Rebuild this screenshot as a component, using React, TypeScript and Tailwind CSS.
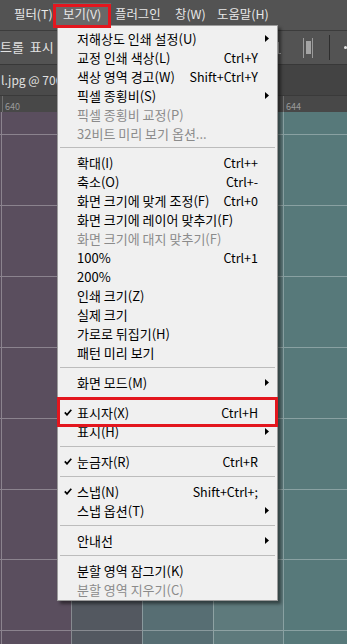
import React from "react";

type Item =
  | { kind: "row"; label: string; shortcut?: string; arrow?: boolean; check?: boolean; disabled?: boolean }
  | { kind: "sep"; first?: boolean };

const items: Item[] = [
  { kind: "row", label: "저해상도 인쇄 설정(U)", arrow: true },
  { kind: "row", label: "교정 인쇄 색상(L)", shortcut: "Ctrl+Y" },
  { kind: "row", label: "색상 영역 경고(W)", shortcut: "Shift+Ctrl+Y" },
  { kind: "row", label: "픽셀 종횡비(S)", arrow: true },
  { kind: "row", label: "픽셀 종횡비 교정(P)", disabled: true },
  { kind: "row", label: "32비트 미리 보기 옵션...", disabled: true },
  { kind: "sep", first: true },
  { kind: "row", label: "확대(I)", shortcut: "Ctrl++" },
  { kind: "row", label: "축소(O)", shortcut: "Ctrl+-" },
  { kind: "row", label: "화면 크기에 맞게 조정(F)", shortcut: "Ctrl+0" },
  { kind: "row", label: "화면 크기에 레이어 맞추기(F)" },
  { kind: "row", label: "화면 크기에 대지 맞추기(F)", disabled: true },
  { kind: "row", label: "100%", shortcut: "Ctrl+1" },
  { kind: "row", label: "200%" },
  { kind: "row", label: "인쇄 크기(Z)" },
  { kind: "row", label: "실제 크기" },
  { kind: "row", label: "가로로 뒤집기(H)" },
  { kind: "row", label: "패턴 미리 보기" },
  { kind: "sep" },
  { kind: "row", label: "화면 모드(M)", arrow: true },
  { kind: "sep" },
  { kind: "row", label: "표시자(X)", shortcut: "Ctrl+H", check: true },
  { kind: "row", label: "표시(H)", arrow: true },
  { kind: "sep" },
  { kind: "row", label: "눈금자(R)", shortcut: "Ctrl+R", check: true },
  { kind: "sep" },
  { kind: "row", label: "스냅(N)", shortcut: "Shift+Ctrl+;", check: true },
  { kind: "row", label: "스냅 옵션(T)", arrow: true },
  { kind: "sep" },
  { kind: "row", label: "안내선", arrow: true },
  { kind: "sep" },
  { kind: "row", label: "분할 영역 잠그기(K)" },
  { kind: "row", label: "분할 영역 지우기(C)", disabled: true },
];

const columns = [
  { w: "w-[1px]", bg: "bg-[#5a4e5e]", border: "" },
  { w: "w-[70px]", bg: "bg-[#5a4e5e]", border: "border-l border-white/30" },
  { w: "w-[71px]", bg: "bg-[#535860]", border: "border-l border-white/30" },
  { w: "w-[71px]", bg: "bg-[#576e73]", border: "border-l border-white/30" },
  { w: "w-[70px]", bg: "bg-[#5e7a7c]", border: "border-l border-white/30" },
  { w: "flex-1", bg: "bg-[#57797a]", border: "border-l border-white/30" },
];

const rows = [
  "h-[22px]",
  "h-[71px] border-t border-white/30",
  "h-[71px] border-t border-white/30",
  "h-[71px] border-t border-white/30",
  "h-[71px] border-t border-white/30",
  "h-[71px] border-t border-white/30",
  "h-[70px] border-t border-white/30",
  "h-[71px] border-t border-white/30",
  "flex-1 border-t border-white/30",
];

function Check() {
  return (
    <svg width="8" height="7" viewBox="0 0 8 7" className="block">
      <path d="M0.8 3.4 L3 5.8 L7.3 0.8" fill="none" stroke="#000" strokeWidth="1.7" />
    </svg>
  );
}

function Arrow() {
  return (
    <svg width="4" height="7" viewBox="0 0 4 7" className="block">
      <polygon points="0,0 4,3.5 0,7" fill="#000" />
    </svg>
  );
}

export default function App() {
  return (
    <div className="relative w-[347px] h-[644px] overflow-hidden bg-[#535353] flex flex-col font-['Noto_Sans_CJK_KR',sans-serif] text-[13px]">
      {/* Menu bar */}
      <div className="h-[30px] shrink-0 flex items-center pl-[14px] text-[#e8e8e8] pb-[2px] text-[12.4px]">
        <div className="w-[39px] whitespace-nowrap">필터(T)</div>
        <div className="w-[58px] h-[24px] mt-[2px] bg-[#686868] flex items-center pl-[10px] whitespace-nowrap pb-[2px]">보기(V)</div>
        <div className="w-[60px] ml-[4px] whitespace-nowrap">플러그인</div>
        <div className="w-[42px] whitespace-nowrap">창(W)</div>
        <div className="whitespace-nowrap">도움말(H)</div>
      </div>
      <div className="h-px shrink-0 bg-[#3c3c3c]" />
      {/* Options bar */}
      <div className="h-[33px] shrink-0 flex items-center text-[#e2e2e2]">
        <div className="w-[276px] flex">
          <div className="w-[56px] whitespace-nowrap overflow-hidden pb-[1px]">트롤&nbsp; 표시</div>
        </div>
        <div className="w-[5px] h-[12px] flex items-end">
          <div className="w-px h-full bg-[#a8a8a8] ml-[2px]" />
          <div className="w-[2px] h-px bg-[#a8a8a8]" />
        </div>
        <div className="w-[22px]" />
        <div className="w-[10px] h-[20px] flex items-center justify-between">
          <div className="w-px h-full bg-[#9a9a9a]" />
          <div className="w-[5px] h-[13px] bg-[#a4a4a4]" />
          <div className="w-px h-full bg-[#9a9a9a]" />
        </div>
        <div className="w-[16px]" />
        <div className="w-px h-[25px] bg-[#2e2e2e]" />
        <div className="w-[14px]" />
        <div className="w-[3px] h-[3px] rounded-full bg-[#e6e6e6]" />
      </div>
      <div className="h-px shrink-0 bg-[#383838]" />
      {/* Tab bar */}
      <div className="h-[30px] shrink-0 bg-[#434343] flex">
        <div className="w-[250px] bg-[#4a4a4a] flex items-center pl-[1px] text-[#e0e0e0] text-[12px]">
          <div className="whitespace-nowrap">l.jpg @ 706</div>
        </div>
      </div>
      {/* Ruler */}
      <div className="h-[17px] shrink-0 bg-[#484848] border-t border-[#3a3a3a] flex text-[9px] text-[#9a9a9a] leading-none">
        <div className="w-[283px] flex">
          <div className="ml-[2px] w-px h-full bg-[#6e6e6e]" />
          <div className="ml-[2px] pt-[6px]">640</div>
        </div>
        <div className="flex">
          <div className="w-px h-full bg-[#6e6e6e]" />
          <div className="ml-[2px] pt-[6px]">644</div>
        </div>
      </div>
      {/* Canvas */}
      <div className="flex-1 flex">
        {columns.map((c, i) => (
          <div key={i} className={`${c.w} ${c.bg} ${c.border} flex flex-col`}>
            {rows.map((r, j) => (
              <div key={j} className={r} />
            ))}
          </div>
        ))}
      </div>

      {/* Dropdown menu */}
      <div className="absolute left-[57px] top-[25px] w-[221px] bg-[#f0f0f0] border border-[#9c9c9c] pt-[3px] pb-[1px] shadow-[3px_3px_3px_rgba(0,0,0,0.45)] text-black">
        {items.map((it, i) =>
          it.kind === "sep" ? (
            <div key={i} className={it.first ? "h-[10px] pt-[4px]" : "h-[11px] pt-[5px]"}>
              <div className="h-px mx-[2px] bg-[#bcbcbc]" />
            </div>
          ) : (
            <div key={i} className="h-[19px] flex items-center whitespace-nowrap leading-[19px]">
              <div className="w-[19px] flex justify-center pl-[1px]">{it.check ? <Check /> : null}</div>
              <div className={`flex-1 ${it.disabled ? "text-[#8b8b8b]" : "text-black"}`}>{it.label}</div>
              {it.shortcut ? <div className="text-[12.5px]">{it.shortcut}</div> : null}
              <div className="w-[19px] flex pl-[7px]">{it.arrow ? <Arrow /> : null}</div>
            </div>
          )
        )}
      </div>

      {/* Red annotation boxes */}
      <div className="absolute left-[53px] top-[4px] w-[58px] h-[24px] border-[3px] border-[#e3161e]" />
      <div className="absolute left-[57px] top-[397px] w-[221px] h-[30px] border-[3px] border-[#e3161e]" />
    </div>
  );
}
